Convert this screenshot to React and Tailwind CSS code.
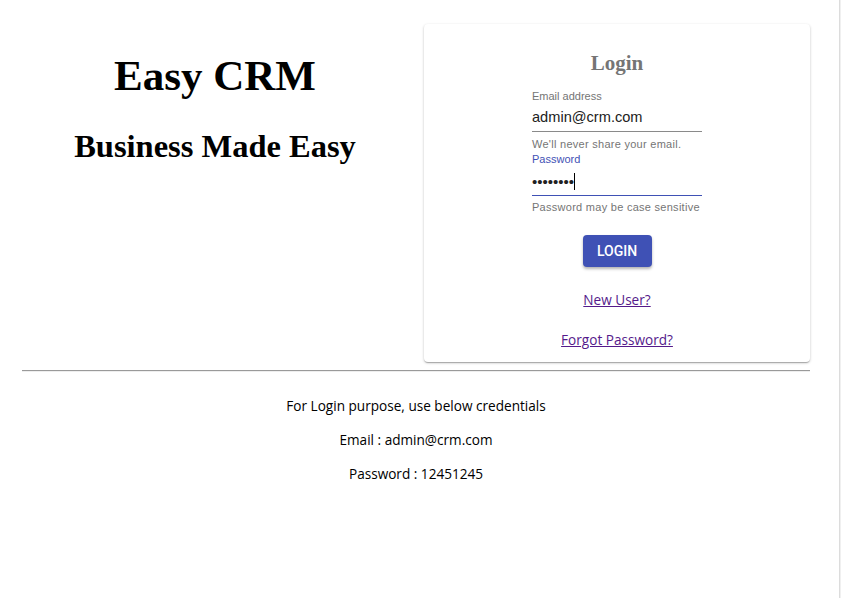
import React from "react";

const sans = "font-['Liberation_Sans',Arial,sans-serif]";

export default function App() {
  return (
    <div className="min-h-[598px] bg-white flex">
      <div className="flex-1 pl-[22px] pr-[29px] pt-6">
        {/* Top row */}
        <div className="grid grid-cols-2 gap-4">
          <div className="text-center font-['Liberation_Serif',serif] text-black">
            <h1 className="text-[43px] font-bold leading-none mt-[30px]">Easy CRM</h1>
            <h2 className="text-[32.5px] font-bold leading-none mt-[33px]">Business Made Easy</h2>
          </div>

          <div className="bg-white rounded shadow-[0_1px_3px_rgba(0,0,0,0.2),0_1px_1px_rgba(0,0,0,0.14),0_2px_1px_-1px_rgba(0,0,0,0.12)] h-[338px] flex flex-col items-center">
            <h3 className="font-['Liberation_Serif',serif] font-bold text-[21px] text-[#757575] mt-[29px] leading-none">
              Login
            </h3>
            <div className={`w-[170px] mt-[16px] ${sans}`}>
              <label className="block text-[11px] text-[#757575] leading-[13px]">Email address</label>
              <div className="border-b border-[#8a8a8a] pt-[6px] pb-[5px]">
                <span className="text-[14.6px] text-[#212121] leading-[17px] block">admin@crm.com</span>
              </div>
              <p className="text-[11px] tracking-[0.025em] whitespace-nowrap text-[#757575] leading-[13px] mt-[6px]">We'll never share your email.</p>
              <label className="block text-[11px] text-[#3f51b5] leading-[13px] mt-[2px]">Password</label>
              <div className="border-b border-[#3f51b5] pt-[6px] pb-[5px] flex items-center h-[30px]">
                <span className="text-[15px] text-[#212121] leading-none">••••••••</span>
                <span className="w-px h-[17px] bg-black" />
              </div>
              <p className="text-[11px] tracking-[0.025em] whitespace-nowrap text-[#757575] leading-[13px] mt-[5px]">Password may be case sensitive</p>
            </div>
            <button className="mt-[21px] bg-[#3f51b5] text-white text-[14px] font-medium rounded h-[32px] w-[69px] shadow-[0_2px_3px_rgba(0,0,0,0.3)] font-['Roboto',sans-serif]">
              LOGIN
            </button>
            <a href="#" className="mt-[23px] text-[13.6px] text-[#551a8b] underline font-['Open_Sans',sans-serif] leading-[20px]">
              New User?
            </a>
            <a href="#" className="mt-[20px] text-[13.6px] text-[#551a8b] underline font-['Open_Sans',sans-serif] leading-[20px]">
              Forgot Password?
            </a>
          </div>
        </div>

        <hr className="mt-[8px] border-0 border-t border-[#9a9a9a] border-b border-b-[#eeeeee]" />

        <div className="text-center text-[13.6px] text-black font-['Open_Sans',sans-serif] leading-[20px] mt-[24px]">
          <p>For Login purpose, use below credentials</p>
          <p className="mt-[14px]">Email : admin@crm.com</p>
          <p className="mt-[14px]">Password : 12451245</p>
        </div>
      </div>
      <div className="w-[2px] bg-[#f0f0f0] border-l border-[#dcdcdc]" />
    </div>
  );
}
